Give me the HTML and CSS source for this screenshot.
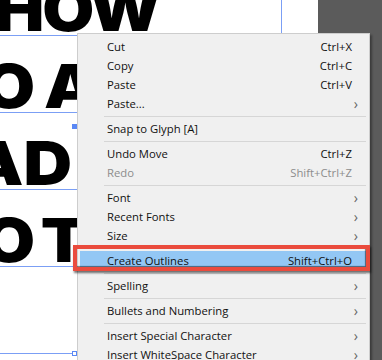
FILE: index.html
```html
<!DOCTYPE html>
<html lang="en">
<head>
    <meta charset="UTF-8">
    <title>Create Outlines</title>
    <link rel="stylesheet" href="styles.css">
</head>
<body>
    <div class="workspace">
        <div class="artboard">
            <div class="headline">
                <div class="line line-1">HOW</div>
                <div class="line line-2">O A</div>
                <div class="line line-3">AD</div>
                <div class="line line-4">O T</div>
            </div>

            <!-- text frame guides -->
            <div class="guide guide-h" style="top: 35px;"></div>
            <div class="guide guide-h" style="top: 112px;"></div>
            <div class="guide guide-h" style="top: 189px;"></div>
            <div class="guide guide-h" style="top: 266px;"></div>
            <div class="guide guide-h guide-bottom"></div>
            <div class="guide guide-v"></div>
            <div class="handle handle-filled"></div>
            <div class="handle handle-hollow"></div>
        </div>
        <div class="pasteboard"></div>

        <div class="context-menu">
            <div class="menu-item"><span>Cut</span><span class="shortcut">Ctrl+X</span></div>
            <div class="menu-item"><span>Copy</span><span class="shortcut">Ctrl+C</span></div>
            <div class="menu-item"><span>Paste</span><span class="shortcut">Ctrl+V</span></div>
            <div class="menu-item"><span>Paste...</span><span class="arrow">&rsaquo;</span></div>
            <div class="menu-sep"></div>
            <div class="menu-item"><span>Snap to Glyph [A]</span></div>
            <div class="menu-sep"></div>
            <div class="menu-item"><span>Undo Move</span><span class="shortcut">Ctrl+Z</span></div>
            <div class="menu-item disabled"><span>Redo</span><span class="shortcut">Shift+Ctrl+Z</span></div>
            <div class="menu-sep"></div>
            <div class="menu-item"><span>Font</span><span class="arrow">&rsaquo;</span></div>
            <div class="menu-item"><span>Recent Fonts</span><span class="arrow">&rsaquo;</span></div>
            <div class="menu-item"><span>Size</span><span class="arrow">&rsaquo;</span></div>
            <div class="menu-sep"></div>
            <div class="menu-item active"><span>Create Outlines</span><span class="shortcut">Shift+Ctrl+O</span></div>
            <div class="menu-sep"></div>
            <div class="menu-item"><span>Spelling</span><span class="arrow">&rsaquo;</span></div>
            <div class="menu-sep"></div>
            <div class="menu-item"><span>Bullets and Numbering</span><span class="arrow">&rsaquo;</span></div>
            <div class="menu-sep"></div>
            <div class="menu-item"><span>Insert Special Character</span><span class="arrow">&rsaquo;</span></div>
            <div class="menu-item"><span>Insert WhiteSpace Character</span><span class="arrow">&rsaquo;</span></div>
        </div>

        <!-- red callout around the highlighted command -->
        <div class="callout"></div>
    </div>
</body>
</html>
```

FILE: styles.css
```css
* {
    margin: 0;
    padding: 0;
    box-sizing: border-box;
}

body {
    width: 382px;
    height: 360px;
    overflow: hidden;
    background: #5b5b5b;
}

.workspace {
    display: flex;
    height: 360px;
    position: relative;
    overflow: hidden;
}

.artboard {
    width: 318px;
    height: 360px;
    background: #ffffff;
    position: relative;
    overflow: hidden;
}

.pasteboard {
    flex: 1;
    background: #5b5b5b;
}

/* Big headline text, stretched to mimic a wide geometric black face */
.headline {
    font-family: Inter, 'Noto Sans', sans-serif;
    font-weight: 900;
    font-size: 60px;
    line-height: 77px;
    color: #000;
    margin-top: -29px;
    white-space: nowrap;
}

.line {
    transform: scaleX(1.12);
    transform-origin: left center;
}

.line-1 { margin-left: -6px; letter-spacing: -2px; }
.line-2 { margin-left: -17px; word-spacing: -4px; }
.line-3 { margin-left: -30px; }
.line-4 { margin-left: -17px; word-spacing: -7px; }

/* Illustrator frame guides */
.guide {
    position: absolute;
    background: #7b9ff5;
}

.guide-h {
    left: 0;
    width: 80px;
    height: 1px;
}

.guide-bottom {
    top: 353px;
    width: 73px;
}

.guide-v {
    left: 281px;
    top: 0;
    width: 1px;
    height: 34px;
}

.handle {
    position: absolute;
    width: 5px;
    height: 5px;
}

.handle-filled {
    left: 72px;
    top: 124px;
    background: #5a88f5;
}

.handle-hollow {
    left: 72px;
    top: 351px;
    border: 1px solid #5a88f5;
    background: #fff;
}

/* Context menu */
.context-menu {
    position: absolute;
    left: 77px;
    top: 33px;
    width: 293px;
    background: #f0f0f0;
    border: 1px solid #cdcdcd;
    padding: 3px 3px 3px 2px;
    box-shadow: 2px 2px 2px rgba(0, 0, 0, 0.35);
    font-family: 'Open Sans', 'Noto Sans', sans-serif;
    font-size: 11.3px;
    color: #111;
}

.menu-item {
    display: flex;
    align-items: center;
    justify-content: space-between;
    height: 19px;
    padding: 0 8px 0 27px;
}

.menu-item.disabled {
    color: #8c8c8c;
}

.menu-item.active {
    background: #93c7f4;
}

.shortcut {
    margin-right: 6px;
}

.arrow {
    color: #666;
    font-size: 14px;
    line-height: 19px;
}

.menu-sep {
    height: 6px;
    display: flex;
    align-items: center;
    margin-left: 24px;
}

.menu-sep::after {
    content: '';
    flex: 1;
    height: 1px;
    background: #d6d6d6;
}

.callout {
    position: absolute;
    left: 73px;
    top: 245px;
    width: 297px;
    height: 26px;
    border: 4px solid #ea4b3d;
    box-shadow: 1px 2px 2px rgba(0, 0, 0, 0.55), inset -1px -1px 1px rgba(0, 0, 0, 0.5);
}
```
